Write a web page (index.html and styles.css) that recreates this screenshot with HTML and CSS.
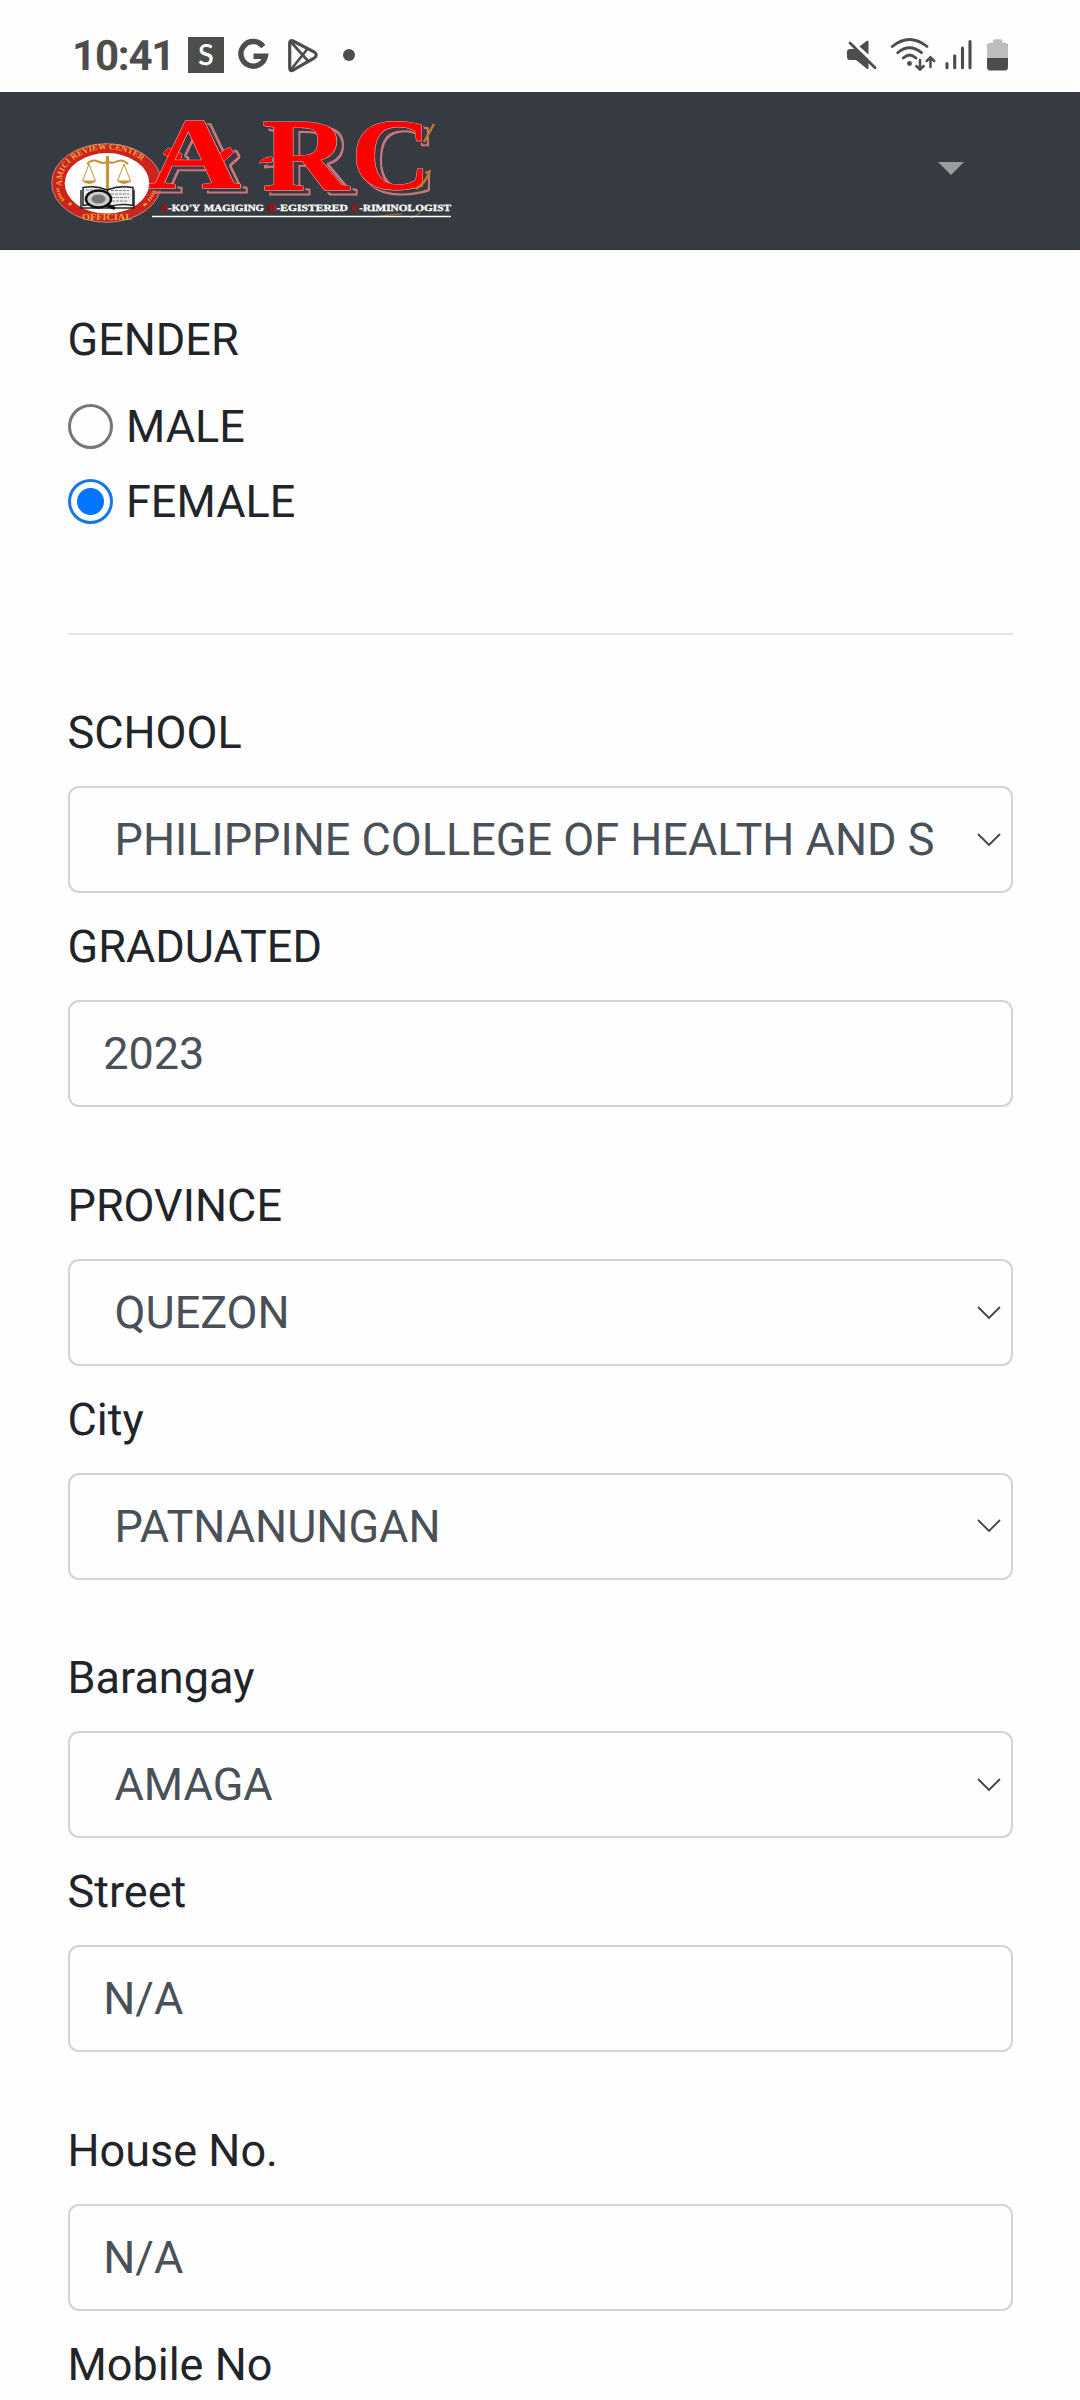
FILE: index.html
```html
<!DOCTYPE html>
<html lang="en">
<head>
<meta charset="utf-8">
<title>Registration</title>
<link rel="stylesheet" href="styles.css">
</head>
<body>
<div class="screen">
  <div class="status">
    <span class="time">10:41</span>
    <span class="s-badge">S</span>
    <svg class="notif" width="130" height="40" viewBox="236 35 130 40">
      <path d="M263.2 46.6A12.3 12.3 0 1 0 265.3 56.2H253.5" fill="none" stroke="#4d4d4d" stroke-width="5.4"/>
      <g fill="none" stroke="#4d4d4d" stroke-width="3.2" stroke-linejoin="round" stroke-linecap="round">
        <path d="M289.7 43Q289.7 39.5 293 41L314.5 52.2Q318 55 314.500 57.800L293 70.200Q289.700 71.500 289.700 68Z"/>
        <path d="M291 42L308.500 61.500M291 69.500L307 49.500" stroke-width="2.7"/>
      </g>
      <circle cx="349" cy="55" r="6" fill="#4d4d4d"/>
    </svg>
    <svg class="system" width="170" height="40" viewBox="842 35 170 40">
      <g fill="#4d4d4d">
        <path d="M859.500 46.500L866.500 41Q868.500 40 868.500 42V54.500Z"/>
        <path d="M850 49H855L868.500 62.500V67.500Q868.500 70 866.500 68.500L856 60H850Q847 60 847 57V52Q847 49 850 49Z"/>
        <circle cx="909.500" cy="63.500" r="2.400"/>
        <path d="M987 46Q987 43.500 990 43.500H1005Q1008 43.500 1008 46V67Q1008 70.500 1005 70.500H990Q987 70.500 987 67Z"/>
      </g>
      <path d="M993 43.500V41Q993 39.300 995 39.300H1001Q1002.500 39.300 1002.500 41V43.500H1005Q1008 43.500 1008 46.500V58H987V46.500Q987 43.500 990 43.500Z" fill="#bebebe"/>
      <g fill="none" stroke="#4d4d4d" stroke-width="2.800" stroke-linecap="round">
        <path d="M850 43L875 67.700"/>
        <path d="M892.300 46.500Q909.500 32.500 927 46.500M897.700 52.700Q909.500 42.800 921.500 52.700M903.300 58Q909.500 51.800 916 58"/>
        <path d="M920 60V69.200M916.300 66L920 69.600L923.700 66M930.500 67V57.500M926.700 61L930.500 57.300L934.200 61" stroke-width="2.500"/>
        <path d="M947 63.500V67.700M954.700 55.700V67.700M962.500 48V67.700M970 41.500V67.700" stroke-width="3.100"/>
      </g>
    </svg>
  </div>

  <header class="navbar">
    <svg class="logo" width="404" height="157" viewBox="50 92 404 157">
      <defs>
        <path id="seal-top" d="M62.500 186A45 32 0 1 1 151.500 186"/>
        <filter id="outline" x="-10%" y="-10%" width="125%" height="125%">
          <feMorphology in="SourceAlpha" operator="dilate" radius="0.6" result="wide"/>
          <feMorphology in="SourceAlpha" operator="erode" radius="0.6" result="thin"/>
          <feComposite in="wide" in2="thin" operator="out" result="ring"/>
          <feFlood flood-color="#c8777b"/>
          <feComposite in2="ring" operator="in"/>
          <feOffset dx="6" dy="3.500" result="line"/>
          <feFlood flood-color="#363b41"/>
          <feComposite in2="SourceAlpha" operator="in" result="dark"/>
          <feOffset in="dark" dx="2" dy="1.500" result="gap"/>
          <feMerge><feMergeNode in="line"/><feMergeNode in="gap"/><feMergeNode in="SourceGraphic"/></feMerge>
        </filter>
      </defs>
      <ellipse cx="106.500" cy="183" rx="54.800" ry="39.300" fill="#cc231c" stroke="#c08a86" stroke-width="1"/>
      <ellipse cx="107" cy="183.300" rx="42.300" ry="30.200" fill="#fff"/>
      <g class="seal-text">
        <text><textPath href="#seal-top">AMICI REVIEW CENTER</textPath></text>
        <text class="official" x="82" y="219.500" textLength="50" lengthAdjust="spacingAndGlyphs">OFFICIAL</text>
      </g>
      <g fill="none" stroke="#e3a339" stroke-width="3" stroke-dasharray="1.500 1">
        <path d="M58 188Q58 195 64 201M154 188Q154 195 148 201"/>
      </g>
      <path d="M68.500 204.500l3-1M143.500 205.500l3-2" stroke="#e3a339" stroke-width="2.500"/>
      <g fill="none" stroke="#c5943a" stroke-width="2">
        <path d="M87 164Q92 158.500 98 161.500T107 161.500Q113 164 118 161Q123 159 128 164"/>
        <path d="M107.500 156V189" stroke-width="3.200"/>
        <path d="M89 164L82.500 181M89 164L95.500 181M124 164L117.500 181M124 164L130.500 181" stroke-width="1"/>
      </g>
      <path d="M81.500 180.500H97Q89 187.500 81.500 180.500ZM116.500 180.500H132Q124 187.500 116.500 180.500Z" fill="#c5943a"/>
      <path d="M83 187.500Q96 185 107 190Q119 185 133 187.500V205.500Q120 203 108 207Q96 203 83 205.500Z" fill="#eee" stroke="#222" stroke-width="1.500"/>
      <path d="M81 190V208H134V190M107.500 190V206" fill="none" stroke="#222" stroke-width="1.500"/>
      <path d="M111 190.500h18M111 194h18M112 197.500h17M112 201h16M86 190h15" stroke="#888" stroke-width="1.200" stroke-dasharray="3 1"/>
      <ellipse cx="98.500" cy="199" rx="12.500" ry="8.500" fill="#ccc" stroke="#111" stroke-width="2.500"/>
      <ellipse cx="98.500" cy="199" rx="7" ry="4.500" fill="#777"/>
      <path d="M107 205L115 208.500" stroke="#111" stroke-width="3.500"/>

      <g class="arc" filter="url(#outline)">
        <path d="M259 163Q263 157 272 157V162Q264 162 259 163ZM168 148L182 154L180 161L163 154ZM218 154L230 147L233 153L223 162Z"/>
        <text x="148" y="188" font-size="102" textLength="93" lengthAdjust="spacingAndGlyphs">A</text>
        <text x="262" y="190" font-size="104" textLength="87" lengthAdjust="spacingAndGlyphs">R</text>
        <text x="351" y="189" font-size="102" textLength="80" lengthAdjust="spacingAndGlyphs">C</text>
      </g>
      <path d="M434 124L424 142M430 170Q427 182 416 189" fill="none" stroke="#c7791e" stroke-width="2.500"/>

      <g class="tagline">
        <text x="160" y="210.500" textLength="40" lengthAdjust="spacingAndGlyphs"><tspan class="red">A</tspan>-KO'Y</text>
        <text x="204" y="210.500" textLength="60" lengthAdjust="spacingAndGlyphs">MAGIGING</text>
        <text x="268" y="210.500" textLength="80" lengthAdjust="spacingAndGlyphs"><tspan class="red">R</tspan>-EGISTERED</text>
        <text x="351" y="210.500" textLength="100" lengthAdjust="spacingAndGlyphs"><tspan class="red">C</tspan>-RIMINOLOGIST</text>
      </g>
      <path d="M374 217Q392 214 402 214M410 218Q418 216 420 212" fill="none" stroke="#8a6420" stroke-width="1.500"/>
      <path d="M152 216.500H451" stroke="#fff" stroke-width="1.500"/>
    </svg>
    <span class="caret"></span>
  </header>

  <form class="form">
    <div class="gender">
      <div class="label">GENDER</div>
      <label class="option"><input class="radio" type="radio" name="gender"><span>MALE</span></label>
      <label class="option"><input class="radio" type="radio" name="gender" checked><span>FEMALE</span></label>
    </div>
    <hr class="rule">
    <section class="group">
      <div class="field"><label class="label">SCHOOL</label>
        <div class="control select"><span>PHILIPPINE COLLEGE OF HEALTH AND S</span><svg class="chevron" viewBox="0 0 24 14"><path d="M1 1L12 12L23 1"/></svg></div></div>
      <div class="field"><label class="label">GRADUATED</label>
        <input class="control" type="text" value="2023"></div>
    </section>
    <section class="group">
      <div class="field"><label class="label">PROVINCE</label>
        <div class="control select"><span>QUEZON</span><svg class="chevron" viewBox="0 0 24 14"><path d="M1 1L12 12L23 1"/></svg></div></div>
      <div class="field"><label class="label">City</label>
        <div class="control select"><span>PATNANUNGAN</span><svg class="chevron" viewBox="0 0 24 14"><path d="M1 1L12 12L23 1"/></svg></div></div>
    </section>
    <section class="group">
      <div class="field"><label class="label">Barangay</label>
        <div class="control select"><span>AMAGA</span><svg class="chevron" viewBox="0 0 24 14"><path d="M1 1L12 12L23 1"/></svg></div></div>
      <div class="field"><label class="label">Street</label>
        <input class="control" type="text" value="N/A"></div>
    </section>
    <section class="group">
      <div class="field"><label class="label">House No.</label>
        <input class="control" type="text" value="N/A"></div>
      <div class="field"><label class="label">Mobile No</label></div>
    </section>
  </form>
</div>
</body>
</html>
```
FILE: styles.css
```css
* { box-sizing: border-box; }
body {
  margin: 0;
  background: #fefefe;
  color: #212529;
  font: 45px/67.5px Roboto, sans-serif;
  text-rendering: geometricPrecision;
}
.screen { height: 2400px; overflow: hidden; }

.status {
  height: 92px;
  padding: 18px 68px 0 72px;
  display: flex;
  align-items: flex-start;
  color: #4d4d4d;
}
.time {
  width: 116px;
  margin-top: 14px;
  font-size: 42px;
  font-weight: 700;
  line-height: 50px;
  letter-spacing: -1.2px;
  white-space: nowrap;
}
.s-badge {
  width: 36px;
  height: 36px;
  margin: 19px 12px 0 0;
  background: #4d4d4d;
  color: #fff;
  font: 600 29px/35px Lato, sans-serif;
  text-align: center;
}
.notif, .system { margin-top: 17px; }
.system { margin-left: auto; }

.navbar {
  height: 158px;
  padding: 0 116px 0 50px;
  display: flex;
  justify-content: space-between;
  background: #363b41;
  border-bottom: 1px solid #303439;
}
.logo { display: block; }
.caret {
  margin-top: 70px;
  width: 0;
  height: 0;
  border: 13px solid transparent;
  border-top-color: #9a9da0;
  border-bottom: 0;
}
.arc {
  font-family: "Liberation Serif", serif;
  font-weight: 700;
  fill: #f00;
  stroke: #eba0a0;
  stroke-width: 1px;
  paint-order: stroke;
}
.seal-text { font: 700 8.6px "Liberation Serif", serif; fill: #e8a83c; }
.official { font-size: 9.5px; }
.tagline { font: 700 9.5px "Liberation Serif", serif; fill: #fff; stroke: #fff; stroke-width: .3px; }
.red { fill: #c00000; stroke: #c00000; }

.form { padding: 56px 67px 0 67.5px; }
.label { display: block; height: 87px; line-height: 67px; }
.option { display: flex; align-items: center; height: 75px; gap: 13.5px; }
.gender .label { height: 83px; line-height: 67.5px; }
.radio {
  appearance: none;
  width: 45px;
  height: 45px;
  margin: 0;
  border: 3px solid #767676;
  border-radius: 50%;
}
.radio:checked {
  border-color: #1577e8;
  background: radial-gradient(circle, #0075ff 13px, transparent 14px);
}
.rule { margin: 94px 0 64.25px; border: 0; height: 2px; background: #e5e5e5; }
.group { height: 472.5px; }
.field { height: 213.75px; }
.control {
  display: block;
  width: 100%;
  height: 107px;
  padding: 0 33.75px;
  border: 2px solid #ced4da;
  border-radius: 11px;
  background: #fefefe;
  color: #495057;
  font: inherit;
}
.select {
  display: flex;
  align-items: center;
  justify-content: space-between;
  padding: .5px 10.5px 0 45px;
  white-space: nowrap;
}
.chevron { width: 24px; height: 14px; fill: none; stroke: #404448; stroke-width: 1.8px; }
```
